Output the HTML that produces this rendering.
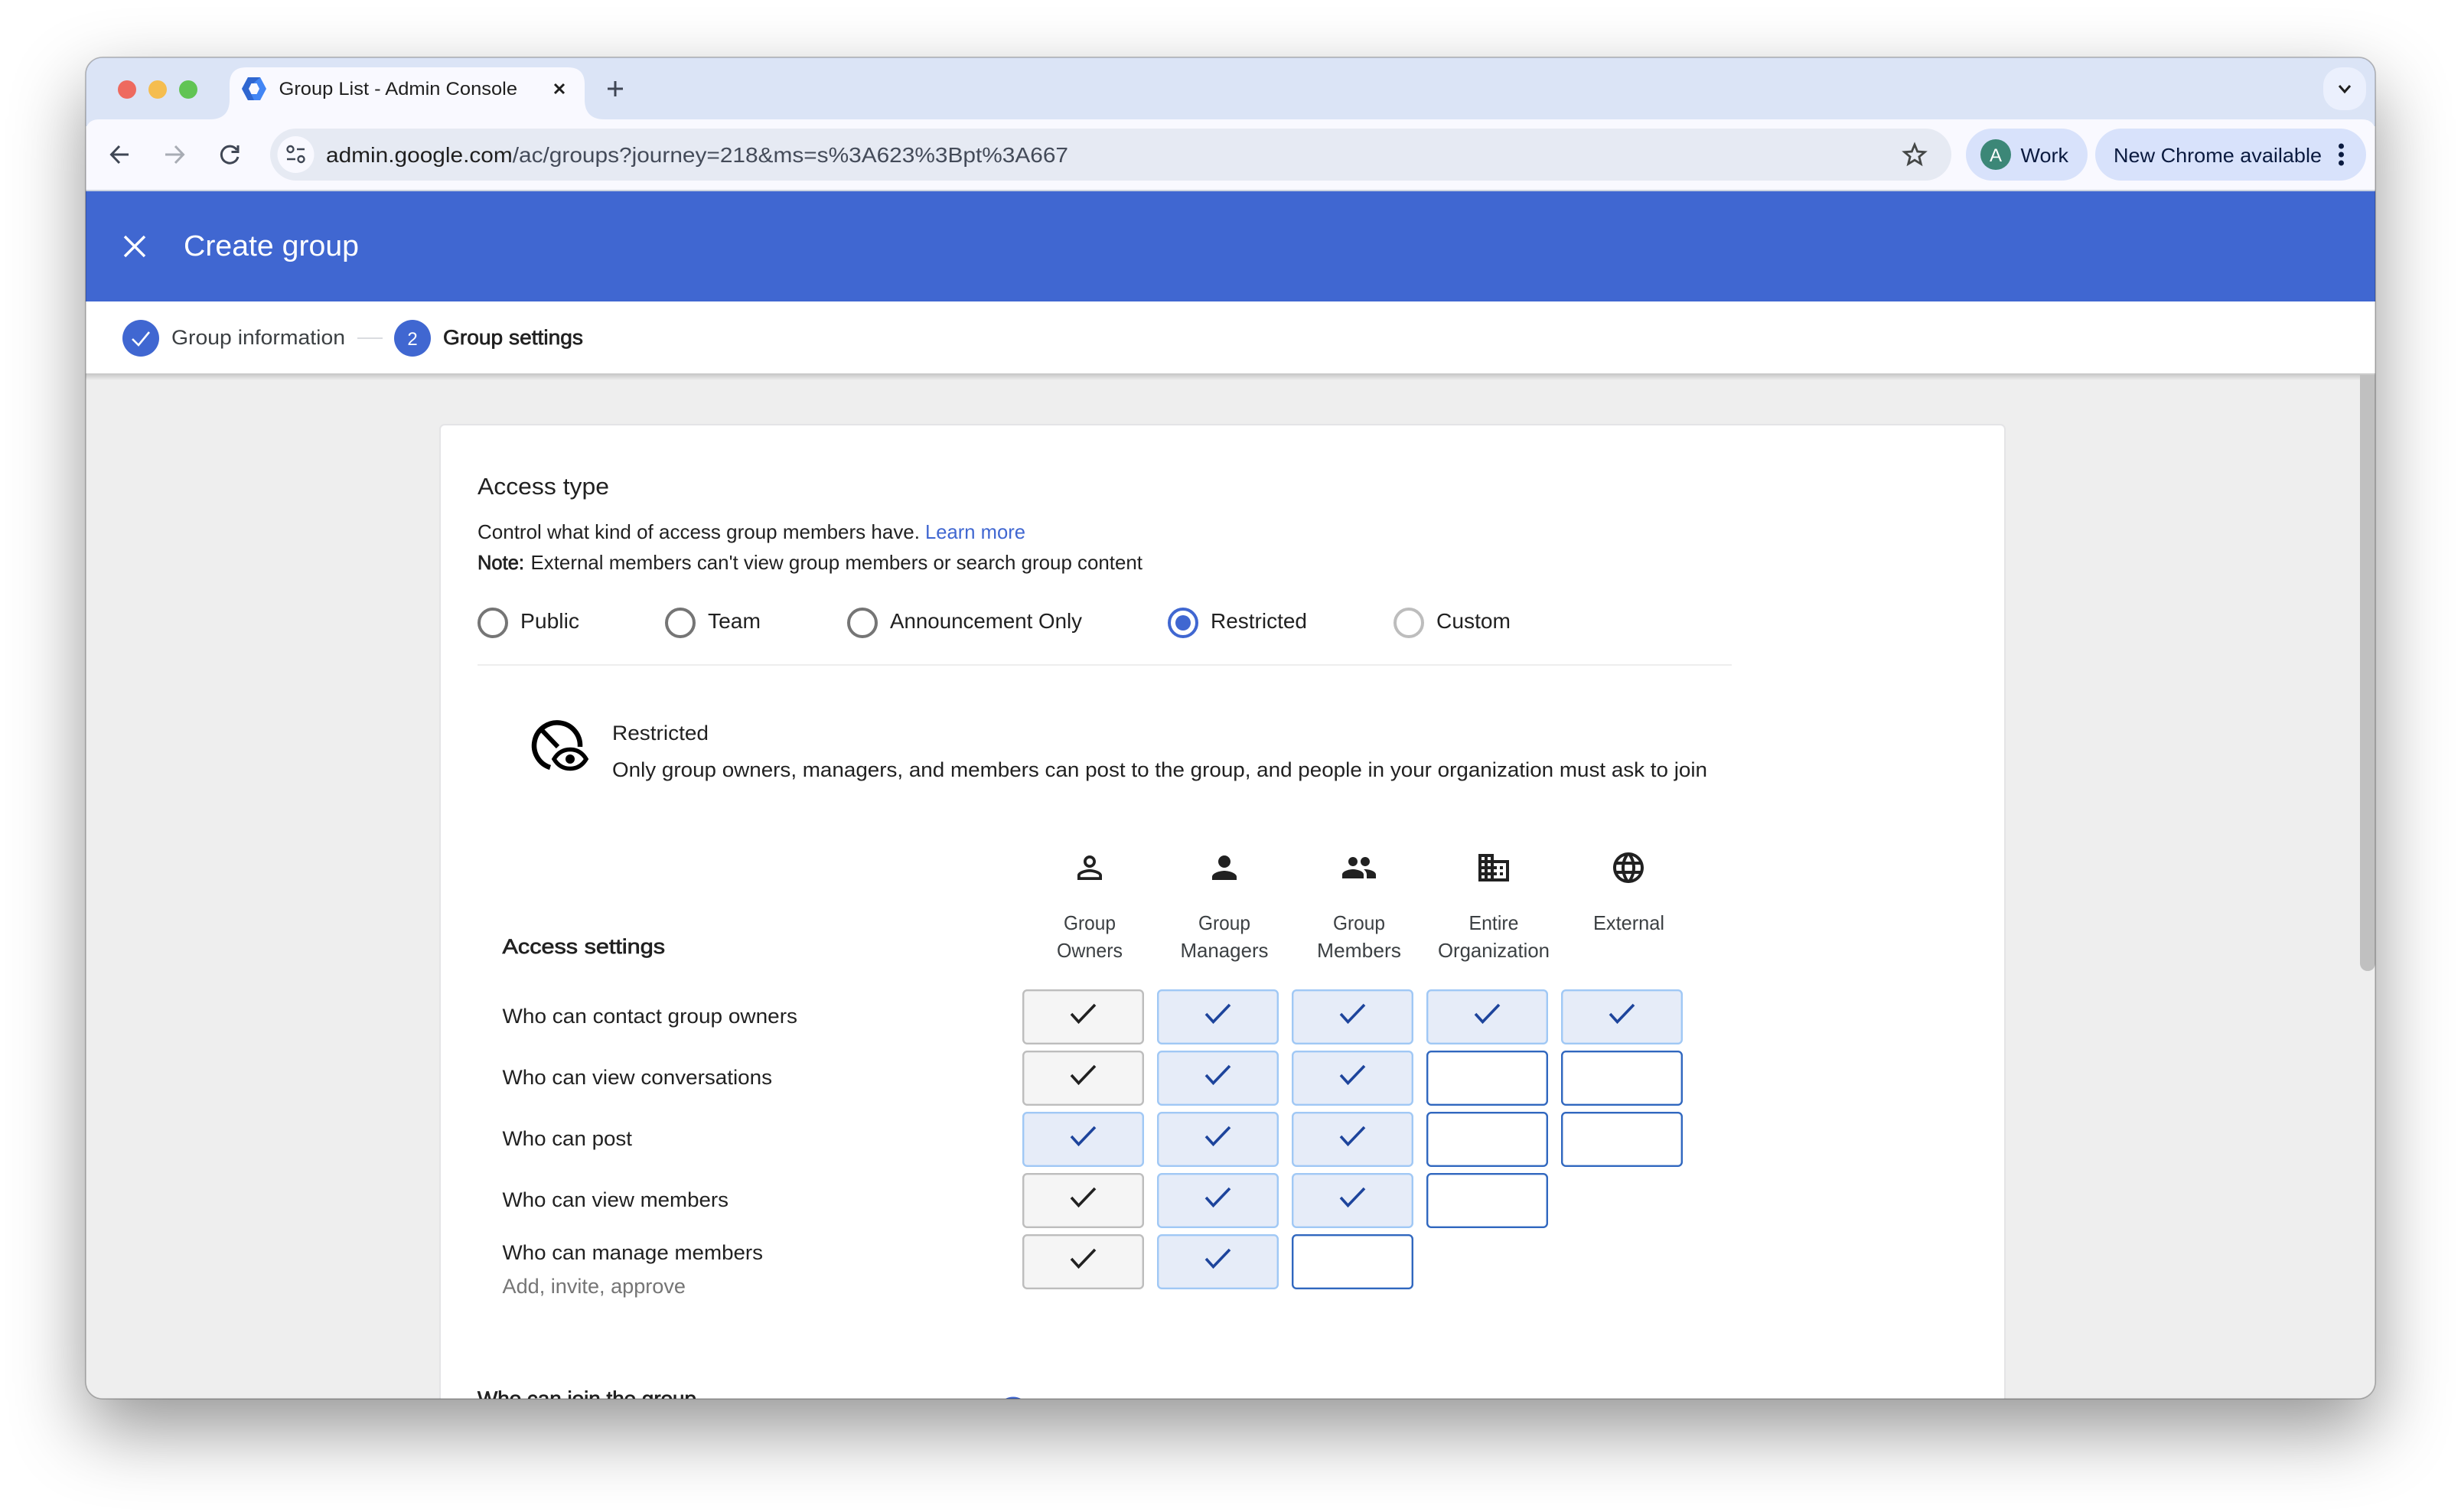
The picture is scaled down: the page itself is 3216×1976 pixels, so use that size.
<!DOCTYPE html>
<html lang="en">
<head>
<meta charset="utf-8">
<title>Group List - Admin Console</title>
<style>
html,body{margin:0;padding:0;width:3216px;height:1976px;background:#fff;overflow:hidden}
#win{position:absolute;left:112px;top:75px;width:2992px;height:1753px;border-radius:22px;box-shadow:0 40px 96px rgba(0,0,0,.42),0 0 2px rgba(0,0,0,.15)}
svg{position:absolute;left:0;top:0}
text{font-family:"Liberation Sans",Arial,sans-serif;fill:#212121;font-size:27px}
.m{stroke:#212121;stroke-width:.7px}
.lbl{fill:#3c4043;font-size:26px}
.ic{fill:#212121}
</style>
</head>
<body>
<div id="win"></div>
<svg width="3216" height="1976" viewBox="0 0 3216 1976" xmlns="http://www.w3.org/2000/svg">
<defs>
<clipPath id="w"><rect x="112" y="75" width="2992" height="1753" rx="22"/></clipPath>
<linearGradient id="sh" x1="0" y1="0" x2="0" y2="1"><stop offset="0" stop-color="#c4c4c4"/><stop offset="1" stop-color="#eeeeee"/></linearGradient>
<g id="g"><rect x="1.2" y="1.2" width="156.6" height="69.6" rx="5" fill="#f5f5f5" stroke="#bdbdbd" stroke-width="2.4"/><path d="M64 32 L73.5 42.5 L95 20" fill="none" stroke="#212121" stroke-width="3.6"/></g>
<g id="b"><rect x="1.2" y="1.2" width="156.6" height="69.6" rx="5" fill="#e6ecf8" stroke="#a0c8f5" stroke-width="2.4"/><path d="M64 32 L73.5 42.5 L95 20" fill="none" stroke="#1d449c" stroke-width="3.6"/></g>
<g id="e"><rect x="1.2" y="1.2" width="156.6" height="69.6" rx="5" fill="#fff" stroke="#3067bf" stroke-width="2.4"/></g>
</defs>
<g clip-path="url(#w)">
<!-- tab strip -->
<rect x="112" y="75" width="2992" height="90" fill="#dbe4f6"/>
<!-- toolbar -->
<path d="M112 250 V174 Q112 156 130 156 H3086 Q3104 156 3104 174 V250 Z" fill="#f9f9ff"/>
<rect x="112" y="248" width="2992" height="2" fill="#ccd3e0"/>
<!-- traffic lights -->
<circle cx="166" cy="117" r="12" fill="#ee6a5f"/>
<circle cx="206" cy="117" r="12" fill="#f5bd4f"/>
<circle cx="246" cy="117" r="12" fill="#61c454"/>
<!-- tab -->
<path d="M274 156 Q300 156 300 130 V110 Q300 88 322 88 H742 Q764 88 764 110 V130 Q764 156 790 156 Z" fill="#f9f9ff"/>
<polygon points="316,116 324,101 340,101 348,116 340,131 324,131" fill="#4285f4"/>
<polygon points="316,116 324,101 340,101 332,108 325,116 332,131 324,131" fill="#2f66d0"/>
<polygon points="325,116 328.500,109 335.500,109 339,116 335.500,123 328.500,123" fill="#f9f9ff"/>
<text x="364.500" y="124" style="font-size:24px;fill:#1f1f1f" textLength="311.500" lengthAdjust="spacingAndGlyphs">Group List - Admin Console</text>
<path d="M725 110 L737 122 M737 110 L725 122" stroke="#1f1f1f" stroke-width="3" fill="none"/>
<path d="M794 116 H814 M804 106 V126" stroke="#3f4654" stroke-width="3" fill="none"/>
<!-- chevron button -->
<rect x="3036" y="88" width="56" height="56" rx="24" fill="#ebf0fd"/>
<path d="M3057 112 L3064 120 L3071 112" fill="none" stroke="#1f1f1f" stroke-width="3"/>
<!-- nav icons -->
<path d="M168 202 H147 M156 191 L145.500 202 L156 213" fill="none" stroke="#3f4654" stroke-width="3"/>
<path d="M216 202 H238 M229 191 L239.500 202 L229 213" fill="none" stroke="#a8acb4" stroke-width="3"/>
<path d="M309.500 196 A11 11 0 1 0 311 205" fill="none" stroke="#3f4654" stroke-width="3"/>
<path d="M311 190 V198.500 H302.500" fill="none" stroke="#3f4654" stroke-width="3"/>
<!-- omnibox -->
<rect x="353" y="168" width="2197" height="68" rx="34" fill="#e6eaf3"/>
<circle cx="386.500" cy="202" r="24" fill="#f9f9ff"/>
<circle cx="379.500" cy="195" r="4" fill="none" stroke="#3f4654" stroke-width="2.4"/>
<path d="M388 195 H398 M375 208 H386" stroke="#3f4654" stroke-width="2.4" fill="none"/>
<circle cx="393.500" cy="208" r="4" fill="none" stroke="#3f4654" stroke-width="2.4"/>
<text x="426" y="212" style="font-size:28px;fill:#444b59" textLength="970" lengthAdjust="spacingAndGlyphs"><tspan style="fill:#1f1f1f">admin.google.com</tspan>/ac/groups?journey=218&amp;ms=s%3A623%3Bpt%3A667</text>
<polygon points="2502,189 2505.700,198 2515.300,198.700 2507.900,204.900 2510.300,214.300 2502,209.200 2493.700,214.300 2496.100,204.900 2488.700,198.700 2498.300,198" fill="none" stroke="#444746" stroke-width="2.800" stroke-linejoin="miter"/>
<!-- profile pills -->
<rect x="2569" y="168" width="159" height="68" rx="34" fill="#d8e2fb"/>
<circle cx="2608" cy="202" r="20" fill="#3c8777"/>
<text x="2608" y="211" text-anchor="middle" style="font-size:24px;fill:#fff">A</text>
<text x="2640.500" y="212" style="font-size:26px;fill:#0a1a3f" textLength="62.500" lengthAdjust="spacingAndGlyphs">Work</text>
<rect x="2738" y="168" width="354" height="68" rx="34" fill="#d8e2fb"/>
<text x="2762" y="212" style="font-size:26px;fill:#0a1a3f" textLength="272" lengthAdjust="spacingAndGlyphs">New Chrome available</text>
<circle cx="3059.500" cy="191" r="3.500" fill="#0a1a3f"/><circle cx="3059.500" cy="202" r="3.500" fill="#0a1a3f"/><circle cx="3059.500" cy="213" r="3.500" fill="#0a1a3f"/>
<!-- page background -->
<rect x="112" y="488" width="2992" height="1340" fill="#eeeeee"/>
<rect x="112" y="488" width="2992" height="9" fill="url(#sh)"/>
<!-- blue header -->
<rect x="112" y="250" width="2992" height="144" fill="#4067d1"/>
<path d="M163 309 L189 335 M189 309 L163 335" stroke="#fff" stroke-width="3.400" fill="none"/>
<text x="240" y="334" style="font-size:38px;fill:#fff" textLength="229" lengthAdjust="spacingAndGlyphs">Create group</text>
<!-- stepper -->
<rect x="112" y="394" width="2992" height="94" fill="#fff"/>
<circle cx="184" cy="442" r="24" fill="#4067d1"/>
<path d="M173 443 L181 451 L195 434" fill="none" stroke="#fff" stroke-width="2.600"/>
<text x="224" y="450" style="font-size:27px;fill:#3c4043" textLength="227" lengthAdjust="spacingAndGlyphs">Group information</text>
<rect x="467" y="441" width="33" height="2" fill="#dadce0"/>
<circle cx="539" cy="442" r="24" fill="#4067d1"/>
<text x="539" y="451" text-anchor="middle" style="font-size:24px;fill:#fff">2</text>
<text x="579" y="450" class="m" style="font-size:27px" textLength="183" lengthAdjust="spacingAndGlyphs">Group settings</text>
<!-- scrollbar -->
<path d="M3084 490 H3104 V1259 A10 10 0 0 1 3084 1259 Z" fill="#c0c0c0"/>
<!-- card -->
<rect x="575" y="555" width="2045" height="1400" rx="6" fill="#fff" stroke="#e4e4e6" stroke-width="2"/>
<text x="624" y="646" style="font-size:31px" textLength="172" lengthAdjust="spacingAndGlyphs">Access type</text>
<text x="624" y="704" style="font-size:26px" textLength="578" lengthAdjust="spacingAndGlyphs">Control what kind of access group members have.</text>
<text x="1209" y="704" style="font-size:26px;fill:#4067d1" textLength="131" lengthAdjust="spacingAndGlyphs">Learn more</text>
<text x="624" y="744" class="m" style="font-size:26px" textLength="61" lengthAdjust="spacingAndGlyphs">Note:</text>
<text x="693.500" y="744" style="font-size:26px" textLength="799.500" lengthAdjust="spacingAndGlyphs">External members can't view group members or search group content</text>
<!-- radios -->
<circle cx="644" cy="814" r="18" fill="none" stroke="#757575" stroke-width="4"/>
<text x="680" y="821" style="font-size:28px" textLength="77" lengthAdjust="spacingAndGlyphs">Public</text>
<circle cx="889" cy="814" r="18" fill="none" stroke="#757575" stroke-width="4"/>
<text x="925" y="821" style="font-size:28px" textLength="69" lengthAdjust="spacingAndGlyphs">Team</text>
<circle cx="1127" cy="814" r="18" fill="none" stroke="#757575" stroke-width="4"/>
<text x="1163" y="821" style="font-size:28px" textLength="251" lengthAdjust="spacingAndGlyphs">Announcement Only</text>
<circle cx="1546" cy="814" r="18" fill="none" stroke="#4067d1" stroke-width="4"/>
<circle cx="1546" cy="814" r="10" fill="#4067d1"/>
<text x="1582" y="821" style="font-size:28px" textLength="126" lengthAdjust="spacingAndGlyphs">Restricted</text>
<circle cx="1841" cy="814" r="18" fill="none" stroke="#bdbdbd" stroke-width="4"/>
<text x="1877" y="821" style="font-size:28px" textLength="97" lengthAdjust="spacingAndGlyphs">Custom</text>
<rect x="624" y="868" width="1639" height="2" fill="#eeeeee"/>
<!-- restricted icon -->
<path d="M758 976 A30 30 0 1 0 719 1003" fill="none" stroke="#000" stroke-width="6.500"/>
<path d="M706 952 L729 976" fill="none" stroke="#000" stroke-width="6"/>
<path d="M724 992 C730 982 738 979.500 745 979.500 C752 979.500 760 982 766 992 C760 1002 752 1004.500 745 1004.500 C738 1004.500 730 1002 724 992Z" fill="#fff" stroke="#000" stroke-width="5.500"/>
<circle cx="745" cy="992" r="6" fill="#000"/>
<text x="800" y="967" style="font-size:27px" textLength="126" lengthAdjust="spacingAndGlyphs">Restricted</text>
<text x="800" y="1015" style="font-size:27px" textLength="1431" lengthAdjust="spacingAndGlyphs">Only group owners, managers, and members can post to the group, and people in your organization must ask to join</text>
<!-- column icons -->
<g class="ic" transform="translate(1400 1110) scale(2)"><path d="M12 5.900c1.160 0 2.100.94 2.100 2.100s-.94 2.100-2.100 2.100S9.900 9.160 9.900 8s.94-2.100 2.100-2.100m0 9c2.970 0 6.100 1.460 6.100 2.100v1.100H5.900V17c0-.64 3.130-2.100 6.100-2.100M12 4C9.790 4 8 5.790 8 8s1.790 4 4 4 4-1.790 4-4-1.790-4-4-4zm0 9c-2.670 0-8 1.340-8 4v3h16v-3c0-2.660-5.330-4-8-4z"/></g>
<g class="ic" transform="translate(1576 1110) scale(2)"><path d="M12 12c2.210 0 4-1.790 4-4s-1.790-4-4-4-4 1.790-4 4 1.790 4 4 4zm0 2c-2.670 0-8 1.340-8 4v2h16v-2c0-2.660-5.330-4-8-4z"/></g>
<g class="ic" transform="translate(1752 1110) scale(2)"><path d="M16 11c1.660 0 2.990-1.340 2.990-3S17.660 5 16 5c-1.660 0-3 1.340-3 3s1.340 3 3 3zm-8 0c1.660 0 2.990-1.340 2.990-3S9.660 5 8 5C6.340 5 5 6.340 5 8s1.340 3 3 3zm0 2c-2.330 0-7 1.170-7 3.500V19h14v-2.500c0-2.330-4.670-3.500-7-3.500zm8 0c-.29 0-.62.02-.97.05 1.160.84 1.970 1.970 1.970 3.450V19h6v-2.500c0-2.330-4.670-3.500-7-3.500z"/></g>
<g class="ic" transform="translate(1928 1110) scale(2)"><path d="M12 7V3H2v18h20V7H12zM6 19H4v-2h2v2zm0-4H4v-2h2v2zm0-4H4V9h2v2zm0-4H4V5h2v2zm4 12H8v-2h2v2zm0-4H8v-2h2v2zm0-4H8V9h2v2zm0-4H8V5h2v2zm10 12h-8v-2h2v-2h-2v-2h2v-2h-2V9h8v10zm-2-8h-2v2h2v-2zm0 4h-2v2h2v-2z"/></g>
<g class="ic" transform="translate(2104 1110) scale(2)"><path d="M11.990 2C6.470 2 2 6.480 2 12s4.470 10 9.990 10C17.520 22 22 17.520 22 12S17.520 2 11.990 2zm6.930 6h-2.950c-.32-1.250-.78-2.450-1.380-3.560 1.840.63 3.370 1.910 4.330 3.560zM12 4.040c.83 1.200 1.480 2.530 1.910 3.960h-3.820c.43-1.430 1.080-2.760 1.910-3.960zM4.260 14C4.100 13.360 4 12.690 4 12s.1-1.360.26-2h3.380c-.08.66-.14 1.320-.14 2 0 .68.06 1.340.14 2H4.260zm.82 2h2.950c.32 1.250.78 2.450 1.380 3.560-1.840-.63-3.370-1.900-4.330-3.560zm2.950-8H5.080c.96-1.660 2.490-2.930 4.330-3.560C8.810 5.550 8.350 6.750 8.030 8zM12 19.960c-.83-1.200-1.480-2.530-1.910-3.960h3.820c-.43 1.430-1.080 2.760-1.910 3.960zM14.340 14H9.660c-.09-.66-.16-1.320-.16-2 0-.68.07-1.350.16-2h4.680c.09.65.16 1.320.16 2 0 .68-.07 1.340-.16 2zm.25 5.560c.6-1.110 1.060-2.310 1.380-3.560h2.950c-.96 1.650-2.490 2.930-4.330 3.560zM16.360 14c.08-.66.14-1.320.14-2 0-.68-.06-1.340-.14-2h3.380c.16.64.26 1.310.26 2s-.1 1.360-.26 2h-3.380z"/></g>
<!-- column labels -->
<text class="lbl" x="1390" y="1215" textLength="68" lengthAdjust="spacingAndGlyphs">Group</text>
<text class="lbl" x="1381" y="1251" textLength="86" lengthAdjust="spacingAndGlyphs">Owners</text>
<text class="lbl" x="1566" y="1215" textLength="68" lengthAdjust="spacingAndGlyphs">Group</text>
<text class="lbl" x="1542.500" y="1251" textLength="115" lengthAdjust="spacingAndGlyphs">Managers</text>
<text class="lbl" x="1742" y="1215" textLength="68" lengthAdjust="spacingAndGlyphs">Group</text>
<text class="lbl" x="1721" y="1251" textLength="110" lengthAdjust="spacingAndGlyphs">Members</text>
<text class="lbl" x="1919.500" y="1215" textLength="65" lengthAdjust="spacingAndGlyphs">Entire</text>
<text class="lbl" x="1879" y="1251" textLength="146" lengthAdjust="spacingAndGlyphs">Organization</text>
<text class="lbl" x="2082" y="1215" textLength="93" lengthAdjust="spacingAndGlyphs">External</text>
<!-- row labels -->
<text x="656.500" y="1246" class="m" textLength="212.500" lengthAdjust="spacingAndGlyphs">Access settings</text>
<text x="656.500" y="1337" textLength="385.500" lengthAdjust="spacingAndGlyphs">Who can contact group owners</text>
<text x="656.500" y="1417" textLength="352.500" lengthAdjust="spacingAndGlyphs">Who can view conversations</text>
<text x="656.500" y="1497" textLength="169.500" lengthAdjust="spacingAndGlyphs">Who can post</text>
<text x="656.500" y="1577" textLength="295.500" lengthAdjust="spacingAndGlyphs">Who can view members</text>
<text x="656.500" y="1646" textLength="340.500" lengthAdjust="spacingAndGlyphs">Who can manage members</text>
<text x="656.500" y="1690" style="fill:#757575" textLength="239.500" lengthAdjust="spacingAndGlyphs">Add, invite, approve</text>
<!-- grid -->
<use href="#g" x="1336" y="1293"/><use href="#b" x="1512" y="1293"/><use href="#b" x="1688" y="1293"/><use href="#b" x="1864" y="1293"/><use href="#b" x="2040" y="1293"/>
<use href="#g" x="1336" y="1373"/><use href="#b" x="1512" y="1373"/><use href="#b" x="1688" y="1373"/><use href="#e" x="1864" y="1373"/><use href="#e" x="2040" y="1373"/>
<use href="#b" x="1336" y="1453"/><use href="#b" x="1512" y="1453"/><use href="#b" x="1688" y="1453"/><use href="#e" x="1864" y="1453"/><use href="#e" x="2040" y="1453"/>
<use href="#g" x="1336" y="1533"/><use href="#b" x="1512" y="1533"/><use href="#b" x="1688" y="1533"/><use href="#e" x="1864" y="1533"/>
<use href="#g" x="1336" y="1613"/><use href="#b" x="1512" y="1613"/><use href="#e" x="1688" y="1613"/>
<!-- clipped next section -->
<text x="624" y="1837" class="m" style="font-size:27px" textLength="286" lengthAdjust="spacingAndGlyphs">Who can join the group</text>
<circle cx="1324" cy="1846" r="19" fill="none" stroke="#4067d1" stroke-width="3"/>
</g>
<rect x="112" y="75" width="2992" height="1753" rx="22" fill="none" stroke="#000" stroke-opacity=".24" stroke-width="1.500"/>
</svg>
</body>
</html>
